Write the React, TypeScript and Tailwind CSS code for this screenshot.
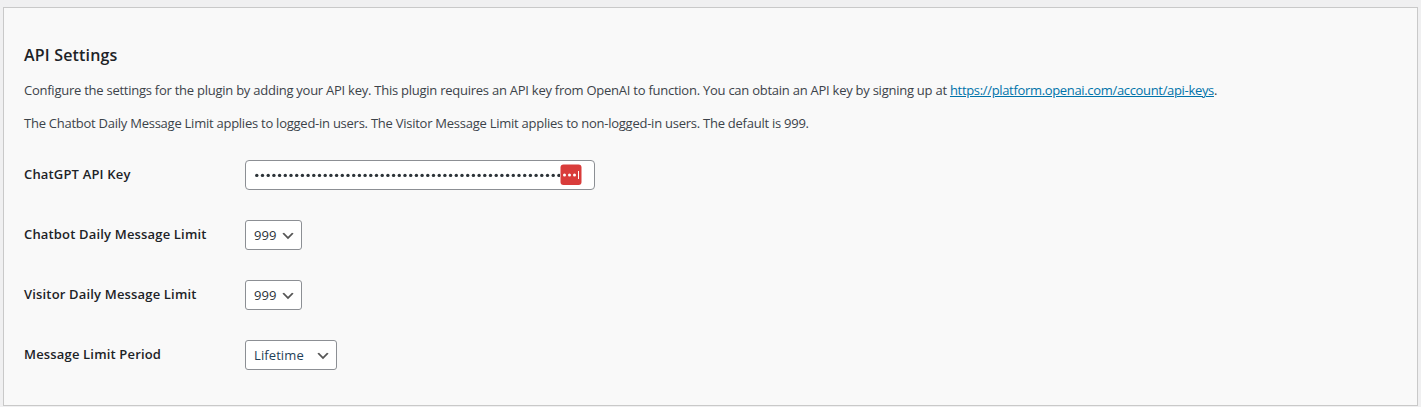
import type { ReactNode } from 'react';

function Chevron() {
  return (
    <svg width="16" height="16" viewBox="0 0 20 20" className="shrink-0" aria-hidden="true">
      <path d="M5 6l5 5 5-5 2 1-7 7-7-7 2-1z" fill="#555" />
    </svg>
  );
}

function Row({ label, children }: { label: string; children: ReactNode }) {
  return (
    <div className="flex h-[60px] items-start">
      <div className="w-[221px] shrink-0 pt-[5px] text-[13px] leading-[18px] font-[560] tracking-[0.17px] text-[#1d2327]">{label}</div>
      {children}
    </div>
  );
}

function Select({ value, className }: { value: string; className: string }) {
  return (
    <button type="button" className={`flex h-[30px] items-center justify-between rounded-[3px] border border-[#8c8f94] bg-white pt-[2px] pr-[5px] pl-2 text-[13px] ${className}`}>
      <span>{value}</span>
      <Chevron />
    </button>
  );
}

const dots = Array.from({ length: 54 }, (_, i) => i);

export default function App() {
  return (
    <div className="h-[407px] bg-[#f0f0f1] pt-[7px] pr-[3px] pl-[3px] font-['Open_Sans',sans-serif]">
      <main className="h-[399px] border border-[#c9c9c9] bg-[#f9f9f9] pt-[37px] pl-5">
        <h2 className="h-[20px] text-[16px] leading-[20px] font-[560] tracking-[0.18px] text-[#1d2327]">API Settings</h2>
        <p className="mt-[15px] text-[13px] leading-[20px] whitespace-nowrap text-[#3c434a]">
          <span className="tracking-[-0.25px]">Configure the settings for the plugin by adding your API key. This plugin requires an API key from OpenAI to function. You can obtain an API key by signing up at{' '}</span>
          <a className="tracking-[-0.33px] text-[#0073aa] underline">https://platform.openai.com/account/api-keys</a>.
        </p>
        <p className="mt-[13px] text-[13px] leading-[20px] tracking-[-0.25px] whitespace-nowrap text-[#3c434a]">
          The Chatbot Daily Message Limit applies to logged-in users. The Visitor Message Limit applies to non-logged-in users. The default is 999.
        </p>
        <div className="mt-[27px]">
          <Row label="ChatGPT API Key">
            <div className="flex h-[30px] w-[350px] items-center rounded-[4px] border border-[#8c8f94] bg-white pl-2">
              <svg width="306" height="22" className="shrink-0" aria-label="API key hidden">
                {dots.map((i) => (
                  <circle key={i} cx={2.8 + i * 5.7} cy="11.4" r="1.7" fill="#2c3338" />
                ))}
              </svg>
              <svg width="22" height="22" className="shrink-0" aria-hidden="true">
                <rect x="0.5" y="0.5" width="21" height="20.5" rx="3" fill="#d93c3b" />
                <circle cx="4.5" cy="11" r="1.5" fill="#fff" />
                <circle cx="9.5" cy="11" r="1.5" fill="#fff" />
                <circle cx="14.5" cy="11" r="1.5" fill="#fff" />
                <rect x="18" y="7" width="1" height="8" fill="#fff" />
              </svg>
            </div>
          </Row>
          <Row label="Chatbot Daily Message Limit"><Select value="999" className="w-[57px] tracking-[0.1px] text-[#2c3338]" /></Row>
          <Row label="Visitor Daily Message Limit"><Select value="999" className="w-[57px] tracking-[0.1px] text-[#2c3338]" /></Row>
          <Row label="Message Limit Period"><Select value="Lifetime" className="w-[92px] tracking-[0.1px] text-[#1f3f58]" /></Row>
        </div>
      </main>
    </div>
  );
}
